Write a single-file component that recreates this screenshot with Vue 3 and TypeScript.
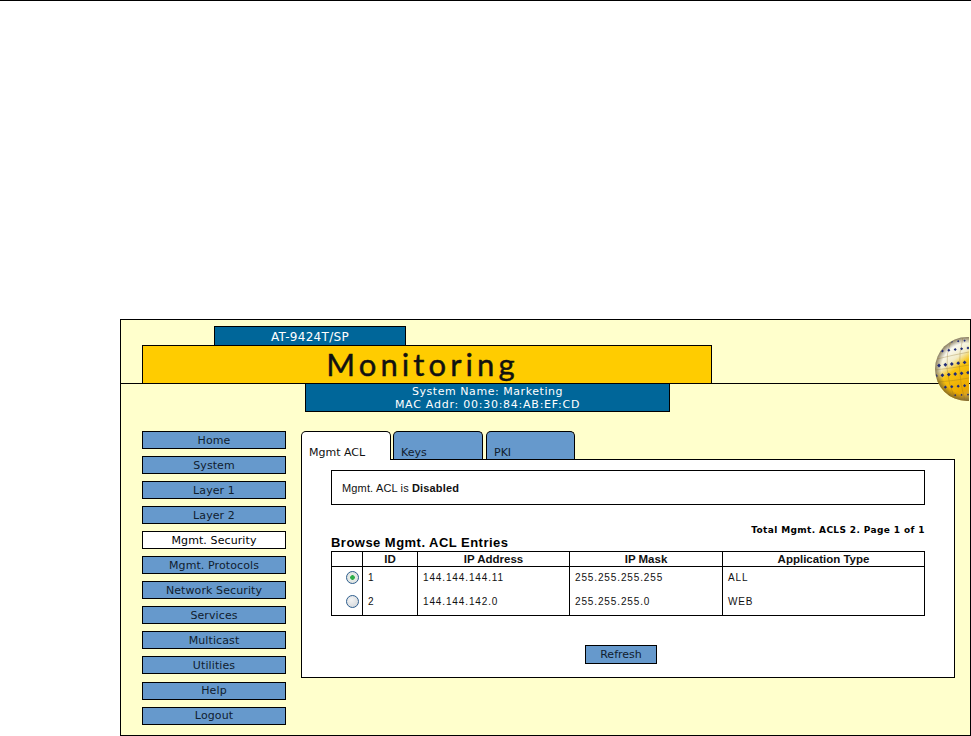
<script setup lang="ts">
interface AclRow { id: number; ip: string; mask: string; type: string; selected: boolean }

const navItems: string[] = ['Home', 'System', 'Layer 1', 'Layer 2', 'Mgmt. Security', 'Mgmt. Protocols', 'Network Security', 'Services', 'Multicast', 'Utilities', 'Help', 'Logout']
const tabs: string[] = ['Mgmt ACL', 'Keys', 'PKI']
const rows: AclRow[] = [
  { id: 1, ip: '144.144.144.11', mask: '255.255.255.255', type: 'ALL', selected: true },
  { id: 2, ip: '144.144.142.0', mask: '255.255.255.0', type: 'WEB', selected: false }
]
// Diamonds on the globe: rows of dots that rise slightly towards the right edge.
const rowStarts: { y: number; slope: number; size: number; shift: number }[] = [
  { y: 6, slope: -0.08, size: 1.2, shift: 4 },
  { y: 15, slope: -0.12, size: 1.5, shift: 1 },
  { y: 29, slope: -0.12, size: 1.9, shift: 4 },
  { y: 39, slope: -0.1, size: 1.9, shift: 1 },
  { y: 51, slope: -0.08, size: 1.6, shift: 4 },
  { y: 59, slope: -0.04, size: 1.1, shift: 1 }
]
const diamonds = rowStarts.flatMap((r) =>
  [0, 1, 2, 3, 4, 5].map((n) => {
    const x = r.shift + n * 6.4
    return {
      key: `${r.y}-${n}`,
      d: `M${x - r.size} ${r.y + x * r.slope}l${r.size} ${-r.size}l${r.size} ${r.size}l${-r.size} ${r.size}z`
    }
  })
)
</script>

<template>
  <div class="page">
    <div class="panel">
      <div class="masthead">
        <div class="model">AT-9424T/SP</div>
        <div class="title">Monitoring</div>
      </div>
      <div class="sysinfo">
        <div class="sys-name">System Name: Marketing</div>
        <div class="sys-mac">MAC Addr: 00:30:84:AB:EF:CD</div>
      </div>
      <svg class="globe" width="34" height="65" viewBox="0 0 34 65">
        <defs>
          <linearGradient id="ball" x1="0" y1="0.1" x2="0.6" y2="0.9">
            <stop offset="0" stop-color="#cfcbb8" />
            <stop offset="0.2" stop-color="#fbfbf6" />
            <stop offset="0.38" stop-color="#f2ecc8" />
            <stop offset="0.52" stop-color="#f8c412" />
            <stop offset="0.85" stop-color="#eba800" />
            <stop offset="1" stop-color="#c9a040" />
          </linearGradient>
          <radialGradient id="rim" cx="0.5" cy="0.5" r="0.5">
            <stop offset="0.8" stop-color="#6a5a30" stop-opacity="0" />
            <stop offset="1" stop-color="#6a5a30" stop-opacity="0.75" />
          </radialGradient>
          <clipPath id="ball-clip"><circle cx="32" cy="32" r="31.5" /></clipPath>
        </defs>
        <circle cx="32" cy="32" r="32" fill="url(#ball)" />
        <circle cx="32" cy="32" r="32" fill="url(#rim)" />
        <g clip-path="url(#ball-clip)">
          <g fill="none" stroke="#8a6a20" stroke-width="0.5" opacity="0.6">
            <path d="M2 22 Q18 18 34 15" />
            <path d="M0 33 Q18 31 34 28" />
            <path d="M3 45 Q18 44 34 41" />
            <path d="M16 3 Q6 30 20 62" />
            <path d="M28 0 Q20 30 30 64" />
          </g>
          <g fill="#1e2a78">
            <path v-for="m in diamonds" :key="m.key" :d="m.d" />
          </g>
        </g>
      </svg>
      <div class="body">
        <nav class="nav">
          <div v-for="item in navItems" :key="item" class="nav-item" :class="{ current: item === 'Mgmt. Security' }">{{ item }}</div>
        </nav>
        <main class="main">
          <div class="tabs">
            <div v-for="(t, i) in tabs" :key="t" class="tab" :class="{ active: i === 0 }">{{ t }}</div>
          </div>
          <section class="card">
            <div class="status">Mgmt. ACL is <b>Disabled</b></div>
            <div class="total">Total Mgmt. ACLS 2. Page 1 of 1</div>
            <h2 class="heading">Browse Mgmt. ACL Entries</h2>
            <table class="grid">
              <colgroup>
                <col class="c1" /><col class="c2" /><col class="c3" /><col class="c4" /><col />
              </colgroup>
              <thead>
                <tr><th></th><th>ID</th><th>IP Address</th><th>IP Mask</th><th>Application Type</th></tr>
              </thead>
              <tbody>
                <tr v-for="r in rows" :key="r.id">
                  <td class="radio-cell"><span class="radio" :class="{ on: r.selected }"></span></td>
                  <td>{{ r.id }}</td>
                  <td>{{ r.ip }}</td>
                  <td>{{ r.mask }}</td>
                  <td>{{ r.type }}</td>
                </tr>
              </tbody>
            </table>
            <div class="actions"><div class="refresh">Refresh</div></div>
          </section>
        </main>
      </div>
    </div>
  </div>
</template>

<style>
html, body { margin: 0; background: #fff; }
</style>

<style scoped>
.page {
  width: 971px;
  height: 736px;
  box-sizing: border-box;
  border-top: 1px solid #000;
  padding: 318px 0 0 120px;
  overflow: hidden;
  font-family: "DejaVu Sans", sans-serif;
  background: #fff;
}
.panel {
  position: relative;
  width: 851px;
  height: 417px;
  box-sizing: border-box;
  border: 1px solid #000;
  background: #ffffcc;
}
.masthead {
  height: 64px;
  box-sizing: border-box;
  padding-top: 6px;
  border-bottom: 1px solid #000;
}
.model {
  width: 192px;
  height: 19px;
  box-sizing: border-box;
  margin-left: 93px;
  border: 1px solid #000;
  border-bottom: 0;
  background: #006699;
  color: #fff;
  font-size: 12px;
  line-height: 20px;
  letter-spacing: 0.3px;
  text-align: center;
}
.title {
  width: 570px;
  height: 38px;
  box-sizing: border-box;
  margin-left: 21px;
  padding-right: 9px;
  border: 1px solid #000;
  border-bottom: 0;
  background: #ffcc00;
  color: #111;
  font-family: Lato, sans-serif;
  font-size: 31px;
  font-weight: 400;
  line-height: 37px;
  letter-spacing: 4.1px;
  text-align: center;
  -webkit-text-stroke: 0.45px #111;
}
.sysinfo {
  width: 365px;
  height: 28px;
  box-sizing: border-box;
  margin-left: 184px;
  padding-top: 1px;
  border: 1px solid #000;
  border-top: 0;
  background: #006699;
  color: #fff;
  font-size: 11px;
  line-height: 13px;
  text-align: center;
}
.sys-name { letter-spacing: 0.55px; }
.sys-mac { letter-spacing: 0.75px; }
.globe {
  position: absolute;
  left: 814px;
  top: 17px;
}
.body {
  display: flex;
  padding: 18px 0 0 21px;
}
.nav {
  display: flex;
  flex-direction: column;
  gap: 7px;
  width: 144px;
  margin-right: 15px;
  margin-top: 1px;
}
.nav-item {
  height: 18px;
  box-sizing: border-box;
  border: 1px solid #000;
  background: #6699cc;
  color: #10202f;
  font-size: 11px;
  line-height: 18px;
  letter-spacing: 0.1px;
  text-align: center;
}
.nav-item:nth-child(11) {
  margin-top: 1px;
}
.nav-item:nth-child(n + 11) {
  line-height: 16px;
}
.nav-item.current {
  background: #fff;
  color: #000;
}
.main {
  width: 654px;
  margin-top: 1px;
}
.tabs {
  display: flex;
  gap: 2px;
  height: 29px;
  position: relative;
  z-index: 1;
}
.tab {
  width: 90px;
  height: 28px;
  box-sizing: border-box;
  padding: 13px 0 0 7px;
  border: 1px solid #000;
  border-bottom: 0;
  border-radius: 5px 5px 0 0;
  background: #6699cc;
  color: #10202f;
  font-size: 11px;
  line-height: 16px;
}
.tab:last-child {
  width: 89px;
  margin-left: 1px;
}
.tab.active {
  height: 29px;
  background: #fff;
  color: #111;
}
.card {
  width: 654px;
  height: 219px;
  box-sizing: border-box;
  margin-top: -1px;
  padding: 10px 29px 0 29px;
  border: 1px solid #000;
  background: #fff;
  font-family: "Liberation Sans", Arial, sans-serif;
}
.status {
  height: 35px;
  box-sizing: border-box;
  padding-left: 10px;
  border: 1px solid #000;
  font-size: 11px;
  line-height: 34px;
  letter-spacing: 0.15px;
  color: #111;
}
.total {
  margin-top: 19px;
  height: 11px;
  font-family: "DejaVu Sans", sans-serif;
  font-size: 9px;
  font-weight: bold;
  line-height: 13px;
  letter-spacing: 0.38px;
  text-align: right;
  color: #000;
}
.heading {
  margin: 1px 0 0;
  height: 15px;
  font-size: 13px;
  font-weight: bold;
  line-height: 14px;
  letter-spacing: 0.47px;
  color: #000;
}
.grid {
  width: 594px;
  height: 65px;
  border-collapse: collapse;
  table-layout: fixed;
  font-size: 10px;
  color: #111;
}
.c1 { width: 31px; }
.c2 { width: 55px; }
.c3 { width: 152px; }
.c4 { width: 153px; }
.grid th,
.grid td {
  padding: 0 0 4px 5px;
  border-left: 1px solid #000;
  border-right: 1px solid #000;
}
.grid th {
  height: 14px;
  padding: 0;
  border: 1px solid #000;
  font-size: 11.5px;
  line-height: 14px;
  text-align: center;
}
.grid td {
  height: 24px;
  box-sizing: border-box;
  letter-spacing: 0.87px;
}
.grid tbody tr:last-child td {
  border-bottom: 1px solid #000;
}
.grid .radio-cell {
  padding: 0 0 3px;
}
.radio {
  display: block;
  width: 13px;
  height: 13px;
  box-sizing: border-box;
  margin: 0 0 0 14px;
  border: 1px solid #2f5f8f;
  border-radius: 50%;
  background: radial-gradient(circle at 40% 35%, #f4f4f4, #cfd3d8);
}
.radio.on {
  background: radial-gradient(circle, #2fae4a 0 2px, #e8ece8 2.6px, #d8dcdc);
}
.actions {
  display: flex;
  justify-content: center;
  margin-top: 29px;
  padding-right: 14px;
}
.refresh {
  width: 72px;
  height: 19px;
  box-sizing: border-box;
  border: 1px solid #000;
  background: #6699cc;
  color: #10202f;
  font-family: "DejaVu Sans", sans-serif;
  font-size: 11px;
  line-height: 17px;
  text-align: center;
}
</style>
